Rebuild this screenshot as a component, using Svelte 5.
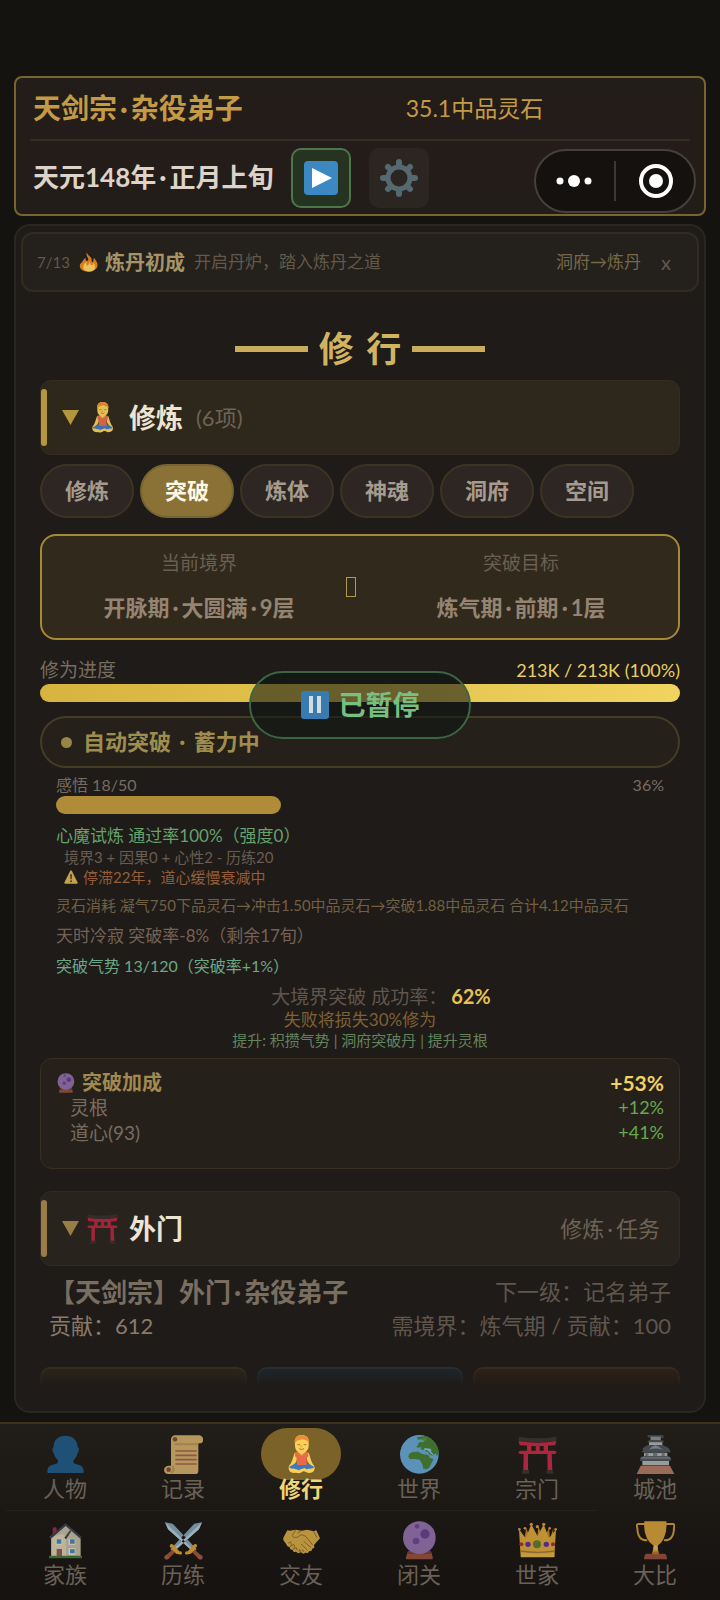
<script>
  const tabs = ['修炼', '突破', '炼体', '神魂', '洞府', '空间'];
  let tab = $state('突破');
  let page = $state('修行');
  const nav = [
    ['person', '人物'], ['scroll', '记录'], ['monk', '修行'], ['world', '世界'], ['torii', '宗门'], ['castle', '城池'],
    ['house', '家族'], ['swords', '历练'], ['hands', '交友'], ['orb', '闭关'], ['crown', '世家'], ['trophy', '大比']
  ];
  const bonuses = [['灵根', '+12%'], ['道心(93)', '+41%']];
  const insight = 18 / 50 * 100;
</script>

{#snippet dot()}<i class="dot">·</i>{/snippet}

{#snippet glyph(name)}
  <svg class="glyph" viewBox="0 0 117 117" aria-hidden="true">
    {#if name === 'person'}
      <path fill="#1f5075" d="M58 2c22 0 37 14 37 34 5 0 5 12 0 18-3 14-11 19-13 24-1 6 3 8 10 10 14 3 21 8 21 22 0 3-1 4-4 4H8c-3 0-4-1-4-4 0-14 7-19 21-22 7-2 12-4 11-10-2-6-10-10-13-24-5-6-5-18 0-18C22 16 36 2 58 2z"/>
    {:else if name === 'scroll'}
      <path fill="#b6985d" d="M32 1h75c14 3 14 24 0 24h-4v82c0 7-3 10-9 10H13c-17 0-17-24 0-25h8V14c0-7 4-12 11-13z"/>
      <path fill="#a2814a" d="M32 25h71v6H32zM21 92l4 5-1 11-6 7h6c10-6 10-17 3-23z"/>
      <circle cx="33" cy="13" r="7" fill="#744438"/><circle cx="14" cy="104" r="7" fill="#744438"/>
      <path stroke="#8d5647" stroke-width="5" d="M34 48h64M34 61h64M34 74h64M34 87h64"/>
    {:else if name === 'monk'}
      <path fill="#f9cf58" d="M52 43h14v14H52zM38 53c-4 10-6 22-12 33-5 5-7 9-6 15 1 8 7 13 19 13l20-8 20 8c12 0 18-5 19-13 1-6-2-10-6-15-6-11-8-23-12-33l-8 5 4 21 12 16-29 8-29-8 13-15 3-22z"/>
      <path fill="#3f79bd" d="M44 83h31l22 13c-5 7-20 3-29 10l-9-4-9 4c-10-7-24-3-29-10z"/>
      <path fill="#e9694a" d="M40 52c7-4 31-4 38 0l1 12-5 5v21H45V69l-6-5z"/>
      <path fill="#fbd057" d="M47 51h24L59 60zM37 109c8 3 14 0 20-6l10-4 8 4-16 9c-8 4-15 4-22-3zM39 20c0-14 8-20 20-20s21 6 21 20v12c0 13-9 21-21 21S39 45 39 32z"/>
      <path fill="#ed8e36" d="M38 25C35 8 47 0 59 0s25 8 22 25l-6-8-13-5-17 5z"/>
      <path fill="none" stroke="#7b4a28" stroke-width="2" d="M46 29h8M65 29h8M52 41q7 5 14 0"/>
      <path fill="none" stroke="#d79a37" stroke-width="2" d="M58 29l-2 7h5M48 57l11 5 12-5"/>
    {:else if name === 'world'}
      <circle cx="58" cy="58" r="58" fill="#5c91b8"/>
      <path fill="#3e6f2f" d="M50 7l28-4c20 7 37 26 39 51l-6 9-4-8-10 7-10-5-4-8-5 2-4-6-12-2 2-8-7 3-8-1 6-9 12-4 8-8-12-4-8 3zM54 25l8-5 10 3-5 8-10 3zM27 58l10-7 17-1 13 7 18 3 5 9 11 3-8 15-6 12-8 4-9-2-3-13-8-14-14-2-14 1-6-7z"/>
      <path fill="#78a7bf" d="M73 39l18 2 4 6-7 3-8-5-7 2zM91 47l9 11-2 3-10-9z"/>
      <path fill="#4f8237" d="M61 14l14-7 7 3-7 8z"/>
    {:else if name === 'torii'}
      <path fill="#33302e" d="M2 5q57 10 113 0v12Q58 27 2 17zM14 104h19v12H11zM86 104h17l4 12H85z"/>
      <path fill="#ac263d" d="M2 18q56 10 113 0l-3 13q-53 5-107 0zM6 47h105q5 3 5 5t-5 5H6q-5-3-5-5t5-5zM27 30h13v18H27zM53 30h12v18H53zM77 30h13v18H77zM17 55h13v50H16zM88 55h13l2 50H89z"/>
    {:else if name === 'castle'}
      <path fill="#9a6b58" d="M14 92h88l13 25H2z"/>
      <path fill="#9a9c9c" d="M19 74h80v17H19zM24 53h70v11H24zM39 17h40v13H39z"/>
      <path fill="#444b50" d="M34 1h48v10l-7-4v10h8v5H35v-5h8V7h-7zM20 39l16-9h45l17 9 7 13H15l6-5zM13 72l10-9h73l10 9-3 6H12z"/>
      <path fill="#777d80" d="M38 44q11-11 20-13 10 3 22 13-22-7-42 0zM44 5h30v10H44z"/>
      <path fill="#646b70" d="M17 65h84l4 6H12zM28 53h9v10h-9zM51 53h13v10H51zM77 53h9v10h-9z"/>
    {:else if name === 'house'}
      <path fill="#8c2440" d="M20 23q0-4 6-4t6 4v24H20z"/><path fill="#aaa28d" d="M16 48L59 11l45 37v59H16z"/>
      <path fill="#bcb39b" d="M50 38l10 8v61H16V48z"/><path fill="#343c42" d="M59 7l48 40-3 7-45-39-45 39-5-6zM55 50l17-22 4 3-16 24z"/>
      <path fill="#ccc6ae" d="M29 53h20v18H29zM68 53h20v18H68zM68 82h20v19H68z"/><path fill="#3c75a6" d="M32 55h14v13H32zM72 55h14v13H72zM72 85h14v12H72z"/>
      <path fill="#805047" d="M32 84h16v24H32z"/><path fill="#3b6832" d="M9 104h99v8H9z"/>
    {:else if name === 'swords'}
      <path fill="#748d9e" d="M3 4l23 4 72 77-9 9L13 25zM114 4l-23 4-72 77 9 9 76-69z"/>
      <path fill="#9bb0bb" d="M3 4l9 21 77 69 4-4zM114 4l-9 21-79 69-4-4z"/>
      <path fill="#874b2e" d="M25 86l8 8-20 20-10-9zM92 86l-8 8 20 20 10-9z"/>
      <path fill="#c18a2c" d="M19 72q4-6 9 0l18 19q4 7-2 9l-8-2-9-10zM98 72q-4-6-9 0L71 91q-4 7 2 9l8-2 9-10z"/>
      <circle cx="22" cy="75" r="5" fill="#bf8b31"/><circle cx="49" cy="96" r="5" fill="#bf8b31"/><circle cx="94" cy="75" r="5" fill="#bf8b31"/><circle cx="68" cy="96" r="5" fill="#bf8b31"/>
      <circle cx="8" cy="109" r="7" fill="#8d4e3e"/><circle cx="109" cy="109" r="7" fill="#8d4e3e"/>
    {:else if name === 'hands'}
      <path fill="#b8943f" d="M23 29l18-3 18 3 17-3 19 5 8-3 11 24-18 20 1 8-7 4-1 5-8 2-3 5-8-1-6 3-7-4-9 3-6-5-7 1-3-6-7-2-2-6-7-3-5-9-7-9L4 50l12-22z"/>
      <path fill="none" stroke="#81612c" stroke-width="3" stroke-linejoin="round" d="M42 26L30 44q3 8 16 5l11-8 13 4 22 27M59 29l-13 8M18 67l8-5 2 10-3 5 10-7 3 9-4 6 9-5 2 8M57 69l19 18M65 61l22 19M95 31l10 19"/>
      <path fill="#806029" d="M49 91l4-8 5 10zM59 89l4-5 3 9z"/>
    {:else if name === 'orb'}
      <path fill="#824737" d="M24 91h69l5 17v7H18v-7z"/><path fill="#663b2c" d="M25 91h67l3 8H21z"/>
      <circle cx="58" cy="50" r="49" fill="#806394"/><circle cx="75" cy="39" r="14" fill="#593b7d"/><circle cx="48" cy="60" r="10" fill="#603f80"/><circle cx="51" cy="16" r="7" fill="#604180"/>
    {:else if name === 'crown'}
      <path fill="#b06f24" d="M5 26l13 31 7-36 12 32 4-35 16 37 4-39 15 37 17-31 3 32 10-33-2 60H8z"/>
      <path fill="#bd9234" d="M3 25l20 27 17-42 19 36L77 10l16 42 21-27-5 83H8z"/>
      <path fill="#8a682c" d="M8 88q52 8 101 0v4q-52 8-101 0z"/>
      <path fill="#c39b41" d="M9 95q50 6 100 0v14H9z"/>
      <circle cx="57" cy="70" r="12" fill="#556c2e"/><circle cx="30" cy="70" r="8" fill="#5c278c"/><circle cx="85" cy="70" r="8" fill="#5c278c"/><circle cx="10" cy="70" r="6" fill="#8f2c34"/><circle cx="105" cy="70" r="6" fill="#8f2c34"/>
      <g fill="#bd8830"><circle cx="4" cy="25" r="4"/><circle cx="21" cy="22" r="4"/><circle cx="40" cy="10" r="5"/><circle cx="58" cy="17" r="5"/><circle cx="77" cy="10" r="5"/><circle cx="95" cy="22" r="4"/><circle cx="113" cy="25" r="4"/></g>
    {:else if name === 'trophy'}
      <path fill="#824436" d="M31 98h56q6 4 6 17H24q0-13 7-17z"/>
      <path fill="none" stroke="#b38336" stroke-width="6" d="M28 9H8Q0 8 4 21q1 39 30 37M90 9h20q7-1 4 12-1 39-30 37"/>
      <path fill="#b88a33" d="M25 1h66q3 27-7 49-5 14-20 24l4 23H49l4-23Q38 64 32 50 22 28 25 1z"/>
      <path fill="#c8a14d" d="M53 73h12v13H53z"/><path fill="#966826" d="M49 92h19v8H49z"/>
    {:else if name === 'fire'}
      <path fill="#d67d25" d="M46 2c-8 25 13 31 8 45-6 13-20 0-15-15-15 14-22 30-32 38-9 27 11 45 49 45s61-25 49-55c-4-10-12-16-16-27-7 9-2 17-7 24-6 5-10-1-8-10C76 27 50 24 46 2z"/>
      <path fill="#eac35b" d="M60 51c7 12-3 23-14 29-5-7-3-14-1-21-13 8-21 18-20 31 1 16 15 24 34 24 21 0 35-10 35-29 0-8-5-16-11-23 2 12-6 20-15 13-5-7 0-17-8-24z"/>
    {:else if name === 'warn'}
      <path fill="#c4a14b" d="M52 7q6-8 13 0l49 98q2 10-8 10H11q-10 0-8-10z"/><path fill="#49361f" d="M51 36h16l-3 41H54z"/><circle cx="59" cy="94" r="8" fill="#49361f"/>
    {/if}
  </svg>
{/snippet}

<div class="page">
  <header>
    <div class="identity">
      <strong>天剑宗{@render dot()}杂役弟子</strong>
      <span>35.1中品灵石</span>
    </div>
    <div class="clock">
      <strong>天元148年{@render dot()}正月上旬</strong>
      <button class="play" aria-label="继续">
        <svg viewBox="0 0 34 34"><rect width="34" height="34" rx="4" fill="#3b88c3"/><path fill="#fff" d="M8 7l20 10L8 27z"/></svg>
      </button>
      <button class="settings" aria-label="设置">
        <svg viewBox="0 0 38 38">
          <g stroke="#566870" stroke-width="6" stroke-linecap="round"><path d="M19 3v32M3 19h32M8 8l22 22M30 8L8 30"/></g>
          <circle cx="19" cy="19" r="11" fill="#2b2622" stroke="#566870" stroke-width="5"/>
        </svg>
      </button>
    </div>
    <div class="capsule">
      <button aria-label="更多"><svg viewBox="0 0 36 36"><g fill="#fff"><circle cx="4" cy="18" r="3.500"/><circle cx="18" cy="18" r="6"/><circle cx="32" cy="18" r="3.500"/></g></svg></button>
      <i></i>
      <button aria-label="关闭"><svg viewBox="0 0 36 36"><circle cx="18" cy="18" r="15" fill="none" stroke="#fff" stroke-width="4"/><circle cx="18" cy="18" r="7" fill="#fff"/></svg></button>
    </div>
  </header>

  <main>
    <div class="tip">
      <span class="step">7/13</span>
      {@render glyph('fire')}
      <strong>炼丹初成</strong>
      <span class="desc">开启丹炉，踏入炼丹之道</span>
      <a href="#alchemy">洞府→炼丹</a>
      <button aria-label="关闭提示">x</button>
    </div>

    <div class="body">
      <h1><i></i><span>修 行</span><i></i></h1>

      <button class="section">
        <svg class="tri" viewBox="0 0 17 15"><path d="M0 0h17L8.500 15z"/></svg>
        {@render glyph('monk')}
        <strong>修炼</strong>
        <span>(6项)</span>
      </button>

      <div class="tabs">
        {#each tabs as t}
          <button class:on={tab === t} onclick={() => (tab = t)}>{t}</button>
        {/each}
      </div>

      <div class="realm">
        <div><span>当前境界</span><strong>开脉期{@render dot()}大圆满{@render dot()}9层</strong></div>
        <i class="arrow"></i>
        <div><span>突破目标</span><strong>炼气期{@render dot()}前期{@render dot()}1层</strong></div>
      </div>

      <div class="progress">
        <div class="row"><span>修为进度</span><b>213K / 213K (100%)</b></div>
        <div class="bar"></div>
        <div class="auto"><i class="lamp"></i><span>自动突破 {@render dot()} 蓄力中</span></div>
        <div class="paused">
          <svg viewBox="0 0 28 28"><rect width="28" height="28" rx="3" fill="#377bb1"/><path fill="#d5dce0" d="M8 5h4v17H8zM16 5h4v17h-4z"/></svg>
          已暂停
        </div>
      </div>

      <div class="details">
        <div class="row insight"><span>感悟 18/50</span><span>36%</span></div>
        <div class="meter"><div style="width: {insight}%"></div></div>
        <p class="trial">心魔试炼 通过率100%（强度0）</p>
        <p class="minor sub">境界3 + 因果0 + 心性2 - 历练20</p>
        <p class="minor sub stall">{@render glyph('warn')}停滞22年，道心缓慢衰减中</p>
        <p class="minor cost">灵石消耗 凝气750下品灵石→冲击1.50中品灵石→突破1.88中品灵石 合计4.12中品灵石</p>
        <p class="season">天时冷寂 突破率-8%（剩余17旬）</p>
        <p class="momentum">突破气势 13/120（突破率+1%）</p>
      </div>

      <div class="odds">
        <p class="chance">大境界突破 成功率：<b>62%</b></p>
        <p class="loss">失败将损失30%修为</p>
        <p class="minor hint">提升: 积攒气势 | 洞府突破丹 | 提升灵根</p>
      </div>

      <div class="bonus">
        <div class="row head"><strong>{@render glyph('orb')}突破加成</strong><b>+53%</b></div>
        {#each bonuses as [name, value]}
          <div class="row"><span>{name}</span><em>{value}</em></div>
        {/each}
      </div>

      <button class="section outer">
        <svg class="tri" viewBox="0 0 17 15"><path d="M0 0h17L8.500 15z"/></svg>
        {@render glyph('torii')}
        <strong>外门</strong>
        <span>修炼{@render dot()}任务</span>
      </button>

      <div class="rank">
        <div class="row"><strong>【天剑宗】外门{@render dot()}杂役弟子</strong><span>下一级：记名弟子</span></div>
        <div class="row"><em>贡献：612</em><span>需境界：炼气期 / 贡献：100</span></div>
      </div>

      <div class="cards"><div></div><div></div><div></div></div>
    </div>
  </main>

  <nav>
    {#each nav as [icon, label]}
      <button class:active={page === label} onclick={() => (page = label)}>
        <span class="badge">{@render glyph(icon)}</span>
        <span class="label">{label}</span>
      </button>
    {/each}
  </nav>
</div>

<style>
  :global(body) { margin: 0; background: #141310; }
  .page {
    box-sizing: border-box; min-height: 100vh; padding-top: 76px;
    display: flex; flex-direction: column; line-height: 1.25;
    font-family: Lato, "Noto Sans CJK SC", sans-serif; color: #776c60;
  }
  .page * { box-sizing: border-box; }
  p, h1 { margin: 0; font-weight: 400; }
  button { font: inherit; color: inherit; border: 0; padding: 0; background: none; cursor: pointer; }
  i, em { font-style: normal; }
  svg { display: block; flex: none; }
  .dot { padding: 0 3px; }
  .row { display: flex; justify-content: space-between; }

  header {
    position: relative; margin: 0 14px; border: 2px solid #79642f; border-radius: 8px;
    background: linear-gradient(#221d19, #241c1a 45%, #221d19); padding: 0 14px;
  }
  .identity {
    display: grid; grid-template-columns: 57% 1fr; align-items: center; height: 63px; padding: 0 3px;
    border-bottom: 2px solid #352d22; color: #c39b44;
  }
  .identity strong { font-size: 28px; }
  .identity span { font-size: 23px; }
  .clock { display: flex; align-items: center; gap: 18px; height: 73px; padding: 0 3px; }
  .clock strong { font-size: 26px; color: #ddd3c9; }
  .play, .settings { display: grid; place-items: center; width: 60px; height: 60px; border-radius: 10px; background: #2b2622; }
  .play { background: #263321; border: 2px solid #4b774d; }
  .play svg { width: 34px; }
  .settings svg { width: 38px; }
  .capsule {
    position: absolute; right: 8px; top: 71px; width: 162px; height: 64px; border-radius: 32px;
    display: flex; align-items: center; justify-content: center; gap: 22px;
    border: 2px solid #45403d; background: #14110f;
  }
  .capsule i { width: 2px; height: 40px; background: #3b3835; }
  .capsule svg { width: 36px; }

  main { margin: 8px 14px 0; border: 2px solid #2a2723; border-radius: 16px; background: #1f1b18; }
  .tip {
    display: flex; align-items: center; height: 60px; margin: 6px 5px 0; padding: 0 26px 0 14px;
    border: 2px solid #312b21; border-radius: 12px; background: #24201b; font-size: 17px; color: #62594b;
  }
  .step { font-size: 15px; }
  .tip .glyph { width: 20px; margin: 0 6px 0 9px; }
  .tip strong { font-size: 20px; color: #a69366; margin-right: 9px; }
  .tip a { margin-left: auto; color: #756848; text-decoration: none; }
  .tip button { margin-left: 20px; font-size: 20px; }

  .body { padding: 35px 24px 24px; }
  h1 { display: flex; align-items: center; justify-content: center; gap: 11px; height: 44px; color: #d2b362; font-size: 35px; font-weight: 700; }
  h1 i { width: 73px; height: 6px; background: #cbac5d; }
  h1 span { word-spacing: 4px; }

  .section {
    display: flex; align-items: center; position: relative; width: 100%; height: 75px; margin-top: 9px; padding: 0 19px 0 21px;
    border: 1px solid #352e20; border-radius: 11px; background: #2e271b; text-align: left; color: #6e6355;
  }
  .section::before { content: ""; position: absolute; left: 0; top: 8px; bottom: 8px; width: 6px; border-radius: 3px; background: #b7973e; }
  .tri { width: 17px; fill: #b4963e; }
  .section .glyph { width: 31px; margin: 0 11px 0 8px; opacity: 0.9; }
  .section strong { font-size: 27px; color: #eee4d4; }
  .section span { font-size: 22px; margin-left: 13px; }
  .outer { margin-top: 22px; background: #28231c; border-color: #302b24; }
  .outer::before { background: #9a7c49; }
  .outer .tri { fill: #9a7c45; }
  .outer span { margin-left: auto; }

  .tabs { display: flex; flex-wrap: wrap; gap: 6px; margin-top: 9px; }
  .tabs button {
    height: 54px; padding: 0 23px; border: 2px solid #3c3423; border-radius: 27px; background: #2d2622;
    font-size: 22px; font-weight: 700; color: #a69b8e;
  }
  .tabs .on { background: #8a7135; border-color: #796431; color: #fff8e6; }

  .realm {
    display: grid; grid-template-columns: 1fr 28px 1fr; align-items: center; height: 106px; margin-top: 16px;
    border: 2px solid #a58933; border-radius: 16px; background: #32291d; padding: 0 10px;
  }
  .realm div { display: flex; flex-direction: column; align-items: center; gap: 16px; }
  .realm span { font-size: 19px; line-height: 26px; color: #6a5f50; }
  .realm strong { font-size: 22px; line-height: 32px; color: #948471; }
  .arrow { width: 10px; height: 20px; border: 1px solid #b29a4d; }

  .progress { position: relative; margin-top: 17px; }
  .progress .row { font-size: 19px; line-height: 26px; margin-bottom: 1px; }
  .progress .row b { font-size: 18px; font-weight: 400; color: #e9cf62; }
  .bar { height: 18px; border-radius: 9px; background: linear-gradient(90deg, #d7b33f, #f1d35f); }
  .auto {
    display: flex; align-items: center; height: 52px; margin-top: 14px; padding: 0 19px;
    border: 2px solid #453c25; border-radius: 26px; background: #25211a; color: #9e8d4e; font-size: 22px; font-weight: 700;
  }
  .lamp { width: 11px; height: 11px; margin-right: 11px; border-radius: 50%; background: #978747; }
  .paused {
    position: absolute; top: 14px; left: 50%; transform: translateX(-50%); width: 222px; height: 68px; border-radius: 34px;
    display: flex; align-items: center; justify-content: center; gap: 10px; white-space: nowrap;
    border: 2px solid #3c6642; background: rgba(15, 23, 19, 0.58); color: #79bf7f; font-size: 27px; font-weight: 700;
  }
  .paused svg { width: 28px; }

  .details { padding: 6px 16px 0; font-size: 17px; line-height: 22px; }
  .insight, .momentum { font-size: 16px; }
  .meter { height: 18px; margin-right: -16px; }
  .meter div { height: 100%; border-radius: 9px; background: #b08c39; }
  .minor { font-size: 15px; line-height: 20px; }
  .trial { margin-top: 11px; color: #65a26c; }
  .sub { padding-left: 8px; color: #695d52; }
  .stall { display: flex; align-items: center; gap: 5px; color: #955d3a; }
  .stall .glyph { width: 14px; }
  .cost { margin-top: 8px; color: #716044; }
  .season { margin-top: 10px; color: #756255; }
  .momentum { margin-top: 8px; color: #6ba887; }
  .odds { margin-top: 6px; text-align: center; }
  .chance { font-size: 19px; line-height: 26px; padding-left: 42px; color: #5f564c; }
  .chance b { margin-left: 4px; font-size: 20px; color: #e4c352; }
  .loss { font-size: 17px; line-height: 20px; color: #7e6134; }
  .hint { color: #63835c; }

  .bonus { height: 111px; margin-top: 8px; padding: 11px 15px; border: 1px solid #38301f; border-radius: 12px; background: #26201a; font-size: 19px; line-height: 25px; }
  .bonus .head { font-size: 20px; color: #a08a50; }
  .bonus strong { display: flex; align-items: center; gap: 6px; }
  .bonus .glyph { width: 20px; }
  .bonus b { font-size: 21px; color: #f1d164; }
  .bonus span { padding-left: 14px; }
  .bonus em { font-size: 18px; color: #64a950; }

  .rank { padding: 9px 9px 0; }
  .rank .row { line-height: 34px; font-size: 22px; color: #5f564c; align-items: center; }
  .rank strong { font-size: 26px; color: #7a6e61; }
  .rank em { color: #887b6c; }

  .cards {
    display: grid; grid-template-columns: repeat(3, 1fr); gap: 10px; margin-top: 24px; height: 20px;
    mask-image: linear-gradient(#000, transparent);
  }
  .cards div { border-radius: 10px 10px 0 0; border: 2px solid #36301f; border-bottom: 0; background: #2c261a; }
  .cards div:nth-child(2) { background: #1e252d; border-color: #2a3036; }
  .cards div:nth-child(3) { background: #302219; border-color: #3a2c20; }

  nav {
    display: grid; grid-template-columns: repeat(6, 1fr); align-content: start; padding: 0 6px; margin-top: 9px; flex: 1;
    border-top: 2px solid #3c321d; background: linear-gradient(#211d18, #161210);
  }
  nav button { display: flex; flex-direction: column; align-items: center; height: 87px; padding-top: 4px; border-bottom: 1px solid #24201c; color: #6a6157; }
  nav button:nth-child(n + 6) { border-color: transparent; padding-top: 3px; }
  nav button:nth-child(6) { padding-top: 4px; }
  .badge { display: grid; place-items: center; width: 80px; height: 52px; border-radius: 26px; }
  nav .glyph { width: 39px; }
  .label { position: relative; margin-top: -4px; font-size: 22px; line-height: 26px; }
  .active .badge { background: #7a6228; }
  .active .label { font-weight: 700; color: #efd678; }
</style>
